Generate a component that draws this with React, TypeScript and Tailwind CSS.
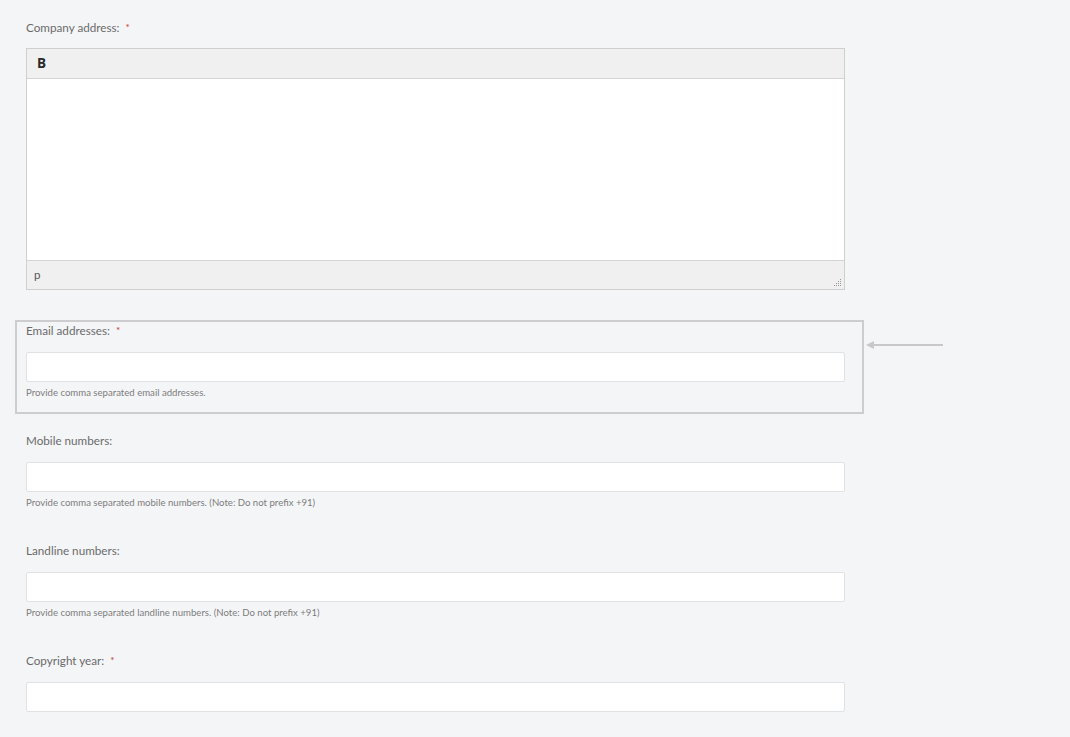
import React from "react";

const font = { fontFamily: "Lato, 'Open Sans', 'Liberation Sans', sans-serif" };

function Label({ text, required }: { text: string; required?: boolean }) {
  return (
    <div className="h-[16px] leading-[16px] text-[11.7px] text-[#6b6b6b]">
      {text}
      {required && <span className="ml-[6px] text-[#c0392b] text-[10px] align-top">*</span>}
    </div>
  );
}

function Input() {
  return <div className="mt-[14px] h-[30px] w-[819px] bg-white border border-[#e1e2e4] rounded-[2px]" />;
}

function Help({ text }: { text: string }) {
  return <div className="mt-[4px] h-[14px] leading-[14px] text-[9.6px] text-[#7d7d7d]">{text}</div>;
}

export default function App() {
  return (
    <div className="min-h-[737px] w-[1070px] bg-[#f4f5f7]" style={font}>
      <div className="pl-[26px] pt-[19px]">
        {/* Company address */}
        <Label text="Company address:" required />
        <div className="mt-[13px] w-[819px] border border-[#cfcfcf] bg-white">
          <div className="h-[30px] bg-[#f0f0f0] border-b border-[#d4d4d4] flex items-center pl-[10px]">
            <span className="text-[13.5px] font-bold text-[#2a2a2a]" style={{ fontFamily: "'Open Sans', sans-serif" }}>B</span>
          </div>
          <div className="h-[181px] bg-white" />
          <div className="relative h-[29px] bg-[#f0f0f0] border-t border-[#d4d4d4] flex items-center pl-[7px]">
            <span className="text-[11.5px] text-[#555]">p</span>
            <svg className="absolute right-[2px] bottom-[2px]" width="8" height="8" viewBox="0 0 8 8">
              <rect x="6" y="0" width="1" height="1" fill="#999" />
              <rect x="6" y="2" width="1" height="1" fill="#999" />
              <rect x="4" y="2" width="1" height="1" fill="#999" />
              <rect x="6" y="4" width="1" height="1" fill="#999" />
              <rect x="4" y="4" width="1" height="1" fill="#999" />
              <rect x="2" y="4" width="1" height="1" fill="#999" />
              <rect x="6" y="6" width="1" height="1" fill="#999" />
              <rect x="4" y="6" width="1" height="1" fill="#999" />
              <rect x="2" y="6" width="1" height="1" fill="#999" />
              <rect x="0" y="6" width="1" height="1" fill="#999" />
            </svg>
          </div>
        </div>

        {/* Email addresses highlighted */}
        <div className="relative mt-[30px] ml-[-11px] w-[849px] border-2 border-[#cdcdcf] pl-[9px] pb-[12px]">
          <Label text="Email addresses:" required />
          <Input />
          <Help text="Provide comma separated email addresses." />
          <div className="absolute left-[849px] top-[18px] flex items-center">
            <svg width="80" height="10" viewBox="0 0 80 10">
              <polygon points="0,5 8,1 8,9" fill="#c8c8ca" />
              <rect x="7" y="4" width="70" height="2" fill="#c8c8ca" />
            </svg>
          </div>
        </div>

        {/* Mobile */}
        <div className="mt-[18px]">
          <Label text="Mobile numbers:" />
          <Input />
          <Help text="Provide comma separated mobile numbers. (Note: Do not prefix +91)" />
        </div>

        {/* Landline */}
        <div className="mt-[32px]">
          <Label text="Landline numbers:" />
          <Input />
          <Help text="Provide comma separated landline numbers. (Note: Do not prefix +91)" />
        </div>

        {/* Copyright */}
        <div className="mt-[32px]">
          <Label text="Copyright year:" required />
          <Input />
        </div>
      </div>
    </div>
  );
}
